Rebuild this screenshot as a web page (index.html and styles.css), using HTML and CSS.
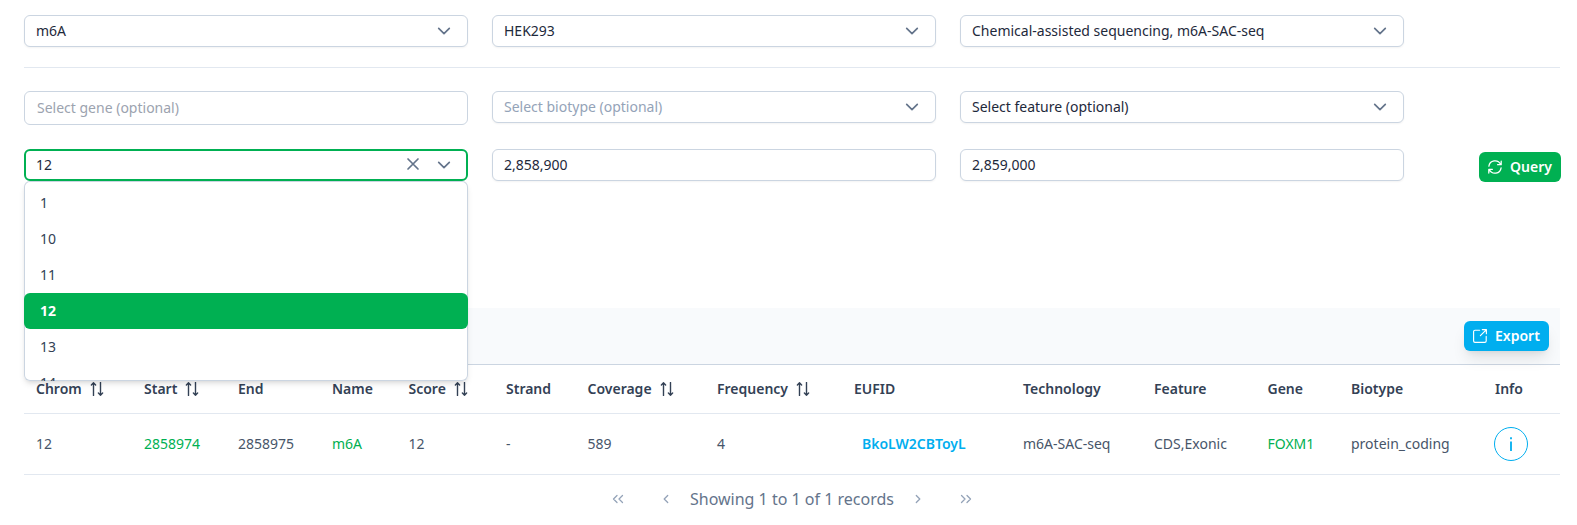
FILE: index.html
```html
<!DOCTYPE html>
<html lang="en">
<head>
<meta charset="utf-8">
<title>Query</title>
<link rel="stylesheet" href="styles.css">
</head>
<body>
<svg class="defs" width="0" height="0">
  <symbol id="chev" viewBox="0 0 14 14"><path d="M1.7 4.4 7 9.6l5.3-5.2" fill="none" stroke="currentColor" stroke-width="1.7" stroke-linecap="round" stroke-linejoin="round"/></symbol>
  <symbol id="times" viewBox="0 0 14 14"><path d="M2 2l10 10M12 2 2 12" fill="none" stroke="currentColor" stroke-width="1.7" stroke-linecap="round"/></symbol>
  <symbol id="sort" viewBox="0 0 14 14"><path d="M3.500 13.500V.8M1.400 2.900 3.500.8l2.100 2.100M10.500.5v12.700M8.400 11.100l2.100 2.100 2.100-2.100" fill="none" stroke="currentColor" stroke-width="1.4" stroke-linecap="round" stroke-linejoin="round"/></symbol>
  <symbol id="left" viewBox="0 0 14 14"><path d="M8.7 3.500 5.200 7l3.500 3.500" fill="none" stroke="currentColor" stroke-width="1.300" stroke-linecap="round" stroke-linejoin="round"/></symbol>
  <symbol id="dleft" viewBox="0 0 14 14"><path d="M6 3.500 2.500 7 6 10.500M11.500 3.500 8 7l3.500 3.500" fill="none" stroke="currentColor" stroke-width="1.300" stroke-linecap="round" stroke-linejoin="round"/></symbol>
</svg>
<main class="page">
  <section class="filters top">
    <div class="field">m6A<span class="actions"><svg class="icon"><use href="#chev"/></svg></span></div>
    <div class="field">HEK293<span class="actions"><svg class="icon"><use href="#chev"/></svg></span></div>
    <div class="field">Chemical-assisted sequencing, m6A-SAC-seq<span class="actions"><svg class="icon"><use href="#chev"/></svg></span></div>
  </section>
  <section class="filters middle">
    <div class="field gene">Select gene (optional)</div>
    <div class="field placeholder">Select biotype (optional)<span class="actions"><svg class="icon"><use href="#chev"/></svg></span></div>
    <div class="field">Select feature (optional)<span class="actions"><svg class="icon"><use href="#chev"/></svg></span></div>
  </section>
  <section class="filters bottom">
    <div class="field open">12<span class="actions"><svg class="icon clear"><use href="#times"/></svg><svg class="icon"><use href="#chev"/></svg></span>
      <ul class="menu">
        <li>1</li><li>10</li><li>11</li><li class="selected">12</li><li>13</li><li>14</li>
      </ul>
    </div>
    <div class="field number">2,858,900</div>
    <div class="field number">2,859,000</div>
    <button class="btn query"><svg class="icon" viewBox="0 0 14 14"><path d="M.9 6.200A6.200 6.200 0 0 1 12.600 4.300M13.200 1v3.700H9.600M13.100 7.800A6.200 6.200 0 0 1 1.400 9.700M.8 13V9.300h3.600" fill="none" stroke="currentColor" stroke-width="1.250" stroke-linecap="round" stroke-linejoin="round"/></svg>Query</button>
  </section>
  <section class="results">
    <div class="toolbar"><button class="btn export"><svg class="icon" viewBox="0 0 14 14"><path d="M6.600 1.200H2A1.400 1.400 0 0 0 .6 2.600V12A1.400 1.400 0 0 0 2 13.400h9.800A1.400 1.400 0 0 0 13.200 12V7.400M9.300.6h4.100v4.100M13.200.8 7.400 6.600" fill="none" stroke="currentColor" stroke-width="1.150" stroke-linecap="round" stroke-linejoin="round"/></svg>Export</button></div>
    <table class="grid">
      <colgroup><col class="c1"><col class="c2"><col class="c3"><col class="c4"><col class="c5"><col class="c6"><col class="c7"><col class="c8"><col class="c9"><col class="c10"><col class="c11"><col class="c12"><col class="c13"><col></colgroup>
      <thead><tr>
        <th><span class="head">Chrom<svg class="icon"><use href="#sort"/></svg></span></th>
        <th><span class="head">Start<svg class="icon"><use href="#sort"/></svg></span></th>
        <th>End</th><th>Name</th>
        <th><span class="head">Score<svg class="icon"><use href="#sort"/></svg></span></th>
        <th>Strand</th>
        <th><span class="head">Coverage<svg class="icon"><use href="#sort"/></svg></span></th>
        <th><span class="head">Frequency<svg class="icon"><use href="#sort"/></svg></span></th>
        <th>EUFID</th><th>Technology</th><th>Feature</th><th>Gene</th><th>Biotype</th><th class="info-head">Info</th>
      </tr></thead>
      <tbody><tr>
        <td>12</td><td class="green">2858974</td><td>2858975</td><td class="green">m6A</td><td>12</td><td>-</td><td>589</td><td>4</td>
        <td><a class="eufid">BkoLW2CBToyL</a></td><td>m6A-SAC-seq</td><td>CDS,Exonic</td><td class="green">FOXM1</td><td>protein_coding</td>
        <td><span class="info"><svg width="4" height="14" viewBox="0 0 4 14"><path d="M2 4.500V14M2 .2V2.200" fill="none" stroke="currentColor" stroke-width="1.800"/></svg></span></td>
      </tr></tbody>
    </table>
    <nav class="pager">
      <span class="page-btn"><svg class="icon"><use href="#dleft"/></svg></span>
      <span class="page-btn"><svg class="icon"><use href="#left"/></svg></span>
      <span>Showing 1 to 1 of 1 records</span>
      <span class="page-btn flip"><svg class="icon"><use href="#left"/></svg></span>
      <span class="page-btn flip"><svg class="icon"><use href="#dleft"/></svg></span>
    </nav>
  </section>
</main>
</body>
</html>
```
FILE: styles.css
```css
* { box-sizing: border-box; }
body { margin: 0; background: #fff; color: #1e293b; font: 14px/20px "Noto Sans", sans-serif; height: 525px; overflow: hidden; }
.defs { display: block; }
.page { padding: 15px 17px 0 24px; }
.icon { width: 14px; height: 14px; flex: none; display: block; }
.filters { display: grid; grid-template-columns: repeat(3, 444px); gap: 24px; align-items: start; width: 1536px; }
.field { position: relative; height: 32px; padding: 0 16px 0 11px; border: 1px solid #cbd5e1; border-radius: 6px; background: #fff; display: flex; align-items: center; box-shadow: 0 1px 2px rgba(18, 18, 23, .05); }
.actions { margin-left: auto; display: flex; gap: 17px; color: #64748b; align-items: center; }
.clear { margin-top: -2px; }
.top { height: 53px; border-bottom: 1px solid #e2e8f0; }
.middle { margin-top: 23px; height: 58px; }
.gene { height: 34px; padding-left: 12px; color: #9ca3af; box-shadow: none; }
.placeholder { color: #94a3b8; }
.bottom { grid-template-columns: repeat(3, 444px) 133px; width: 1537px; height: 159px; }
.open { border: 2px solid #00b052; padding: 0 15px 0 10px; box-shadow: none; }
.menu { position: absolute; z-index: 2; top: 30px; left: -2px; width: 444px; height: 200px; margin: 0; padding: 4px 0 0; list-style: none; background: #fff; border-radius: 6px; box-shadow: inset 0 0 0 1px #cbd5e1, 0 4px 6px -1px rgba(0, 0, 0, .1), 0 2px 4px -2px rgba(0, 0, 0, .1); overflow: hidden; color: #334155; }
.menu li { height: 36px; padding: 8px 16px; }
.menu .selected { background: #00b052; color: #fff; font-weight: 700; border-radius: 6px; }
.btn { display: flex; align-items: center; gap: 8px; height: 30px; border: 0; border-radius: 6px; padding: 0 8px 0 9px; color: #fff; font: 600 14px/20px "Noto Sans", sans-serif; }
.query { width: 82px; margin-top: 3px; justify-self: end; background: #00b052; }
.results { width: 1536px; }
.toolbar { height: 57px; background: #f8fafc; border-bottom: 1px solid #cbd5e1; display: flex; align-items: center; justify-content: flex-end; padding-right: 11px; }
.export { width: 85px; background: #00aeef; box-shadow: 0 10px 15px -3px rgba(0, 0, 0, .1), 0 4px 6px -4px rgba(0, 0, 0, .1); }
.grid { width: 1536px; table-layout: fixed; border-collapse: separate; border-spacing: 0; }
.grid th, .grid td { text-align: left; padding: 0 0 0 12px; border-bottom: 1px solid #e2e8f0; white-space: nowrap; }
.grid th { height: 49px; font-weight: 600; color: #334155; }
.grid td { height: 61px; color: #475569; }
.grid td.green { color: #00b052; }
.c1 { width: 108px; } .c2 { width: 94px; } .c3 { width: 94px; } .c4 { width: 76.5px; } .c5 { width: 97.5px; } .c6 { width: 81.5px; } .c7 { width: 129.5px; } .c8 { width: 137px; } .c9 { width: 169px; } .c10 { width: 131px; } .c11 { width: 113.5px; } .c12 { width: 83.5px; } .c13 { width: 143px; }
.head { display: flex; align-items: center; gap: 8px; }
.eufid { color: #00aeef; font-weight: 600; padding-left: 8px; }
.grid .info-head { padding-left: 13px; }
.info { width: 34px; height: 34px; border: 1px solid #00aeef; border-radius: 50%; color: #00aeef; display: flex; align-items: center; justify-content: center; }
.pager { display: flex; align-items: center; justify-content: center; height: 48px; font-size: 16px; line-height: 24px; color: #64748b; }
.page-btn { width: 48px; display: flex; justify-content: center; color: #94a3b8; }
.flip { transform: scaleX(-1); }
```
